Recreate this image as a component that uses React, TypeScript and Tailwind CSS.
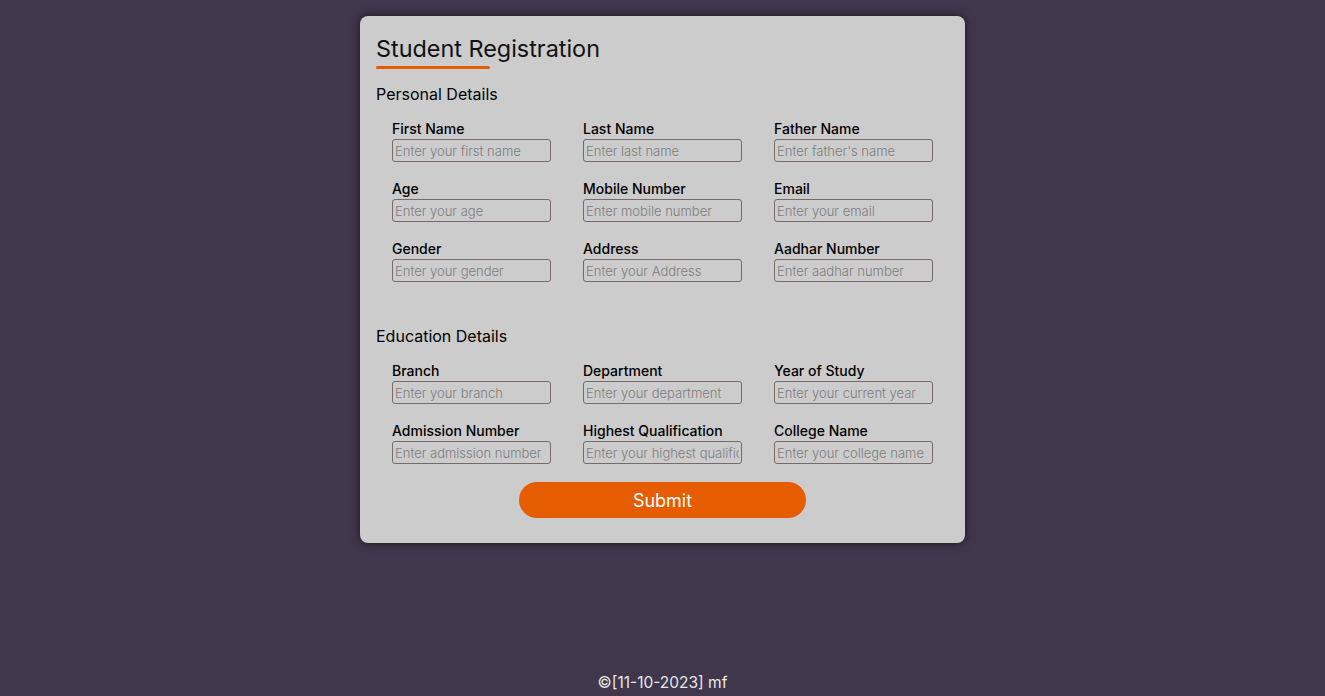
import React from "react";

const personal = [
  ["First Name", "Enter your first name"],
  ["Last Name", "Enter last name"],
  ["Father Name", "Enter father's name"],
  ["Age", "Enter your age"],
  ["Mobile Number", "Enter mobile number"],
  ["Email", "Enter your email"],
  ["Gender", "Enter your gender"],
  ["Address", "Enter your Address"],
  ["Aadhar Number", "Enter aadhar number"],
];

const education = [
  ["Branch", "Enter your branch"],
  ["Department", "Enter your department"],
  ["Year of Study", "Enter your current year"],
  ["Admission Number", "Enter admission number"],
  ["Highest Qualification", "Enter your highest qualification"],
  ["College Name", "Enter your college name"],
];

function Field({ label, ph }: { label: string; ph: string }) {
  return (
    <div className="flex flex-col">
      <label className="text-[14px] leading-[21px] font-medium text-black">{label}</label>
      <input
        placeholder={ph}
        className="w-[159px] h-[23px] border border-[#766a6a] rounded-[3px] bg-transparent px-[2px] text-[13px] font-light text-black placeholder:text-[#7d7d7d] outline-none"
      />
    </div>
  );
}

export default function App() {
  return (
    <div
      className="h-screen bg-[#41374d] flex flex-col"
      style={{ fontFamily: "Inter, 'Noto Sans', sans-serif" }}
    >
      <div className="flex-1">
        <div className="mx-auto mt-[16px] w-[605px] bg-[#cccccc] rounded-[8px] shadow-[0_0_10px_rgba(0,0,0,0.6)] pt-[16px] pb-[25px] px-[16px]">
          <h1 className="text-[23.4px] leading-[34px] text-[#111] font-normal">Student Registration</h1>
          <div className="w-[114px] h-[3px] bg-[#e65c00] rounded-full"></div>
          <h2 className="mt-[13px] text-[16px] leading-[24px] text-black">Personal Details</h2>
          <div className="mt-[12px] pl-[16px] grid grid-cols-[191px_191px_159px] gap-y-[16px]">
            {personal.map(([l, p]) => (
              <Field key={l} label={l} ph={p} />
            ))}
          </div>
          <h2 className="mt-[42px] text-[16px] leading-[24px] text-black">Education Details</h2>
          <div className="mt-[12px] pl-[16px] grid grid-cols-[191px_191px_159px] gap-y-[16px]">
            {education.map(([l, p]) => (
              <Field key={l} label={l} ph={p} />
            ))}
          </div>
          <div className="mt-[18px] flex justify-center">
            <button className="w-[287px] h-[36px] rounded-full bg-[#e65c00] text-white text-[18px]">
              Submit
            </button>
          </div>
        </div>
      </div>
      <footer className="text-center text-[#e8e8e8] text-[15.5px] leading-[24px] pb-[1px]">©[11-10-2023] mf</footer>
    </div>
  );
}
